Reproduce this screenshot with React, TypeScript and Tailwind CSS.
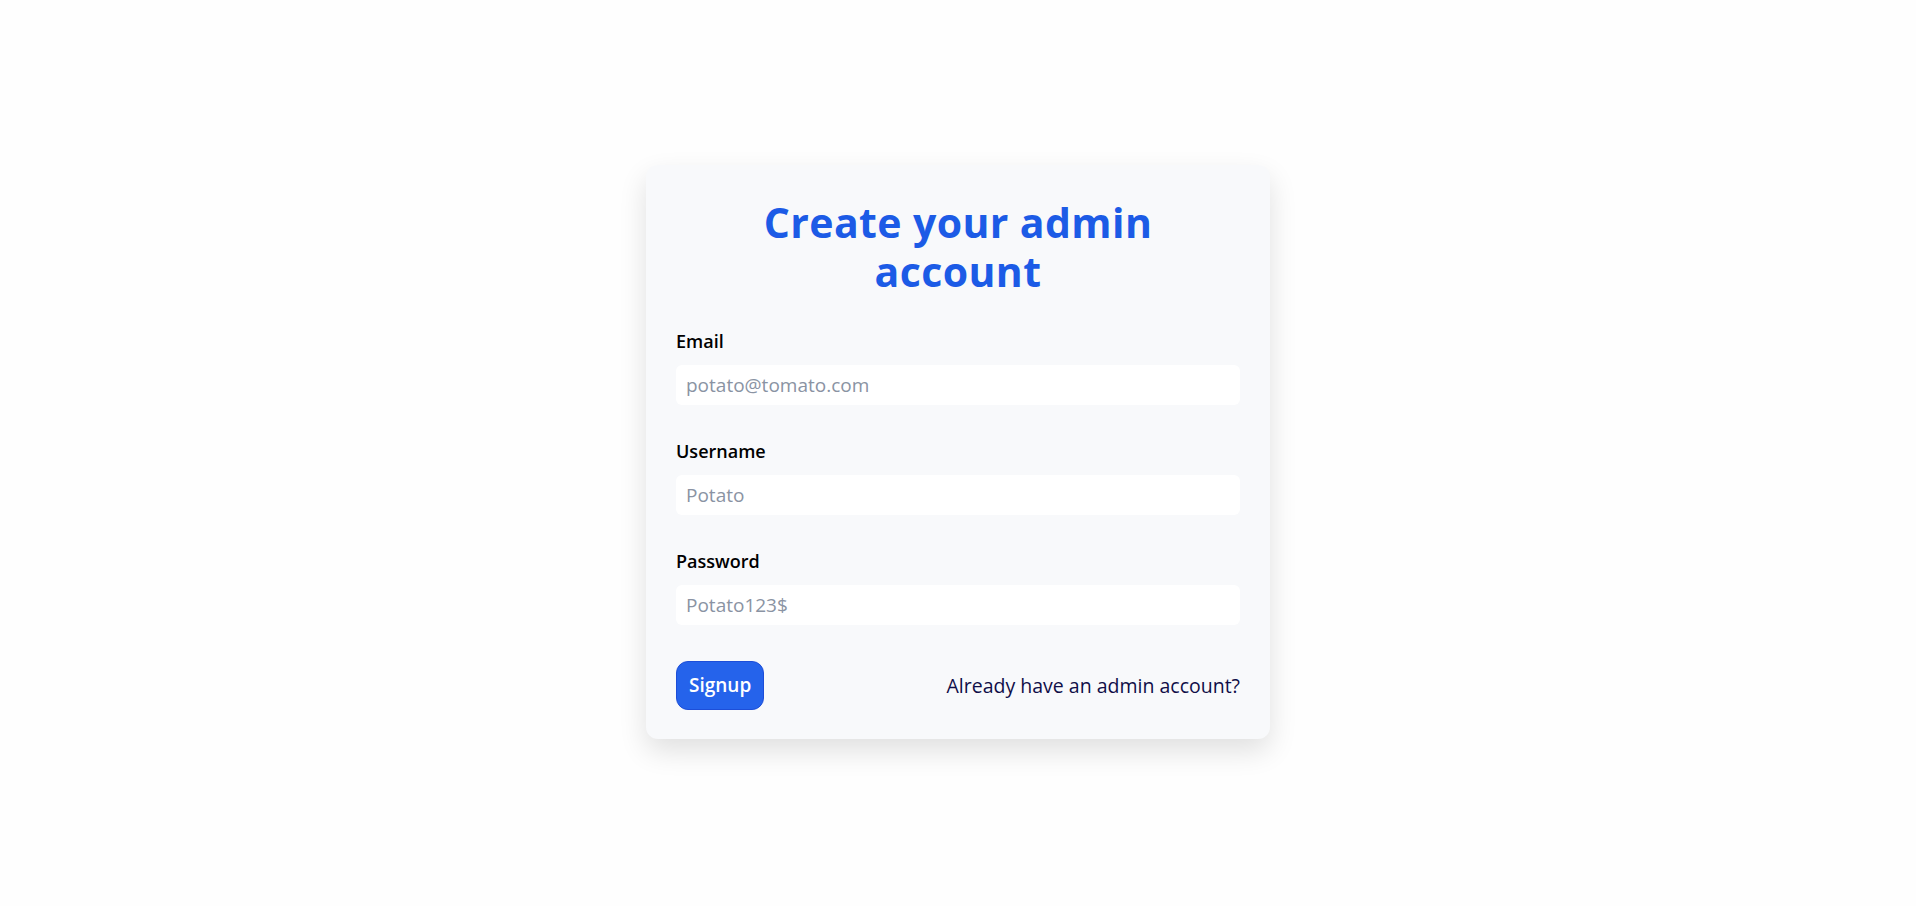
export default function App() {
  const fields = [
    { label: "Email", type: "email", placeholder: "potato@tomato.com" },
    { label: "Username", type: "text", placeholder: "Potato" },
    { label: "Password", type: "password", placeholder: "Potato123$" },
  ];

  return (
    <div className="min-h-screen w-full bg-[#fefefe] flex justify-center pt-[165px] font-['Open_Sans',sans-serif]">
      <div className="w-[624px] self-start rounded-xl bg-[#f8f9fb] shadow-[0_12px_28px_rgba(0,0,0,0.12)] px-[30px] pt-[33px] pb-[29px]">
        <h1 className="mx-auto max-w-[440px] text-center text-[41px] leading-[49px] tracking-[0.4px] font-bold text-[#1c5be6]">
          Create your admin account
        </h1>

        <form className="mt-[31px]" onSubmit={(e) => e.preventDefault()}>
          {fields.map((f) => (
            <div key={f.label} className="mb-8">
              <label className="block text-lg leading-7 font-semibold text-black mb-2.5">{f.label}</label>
              <input
                type={f.type === "password" ? "text" : f.type}
                placeholder={f.placeholder}
                className="block w-full h-10 rounded-md bg-white px-2.5 text-[19px] text-gray-800 placeholder:text-[#8a93a3] outline-none"
              />
            </div>
          ))}

          <div className="flex items-center justify-between pt-1">
            <button
              type="submit"
              className="h-[49px] px-[12px] rounded-xl bg-[#2563eb] border border-[#1d4ed8] text-white text-[19px] font-semibold"
            >
              Signup
            </button>
            <a href="#" className="text-[19.5px] text-[#100e48]">
              Already have an admin account?
            </a>
          </div>
        </form>
      </div>
    </div>
  );
}
